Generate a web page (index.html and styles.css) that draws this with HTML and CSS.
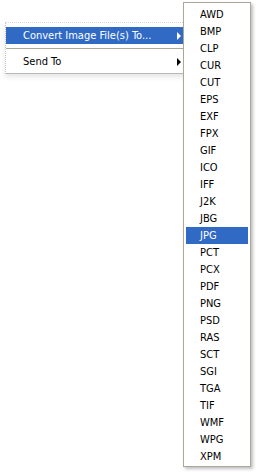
FILE: index.html
```html
<!DOCTYPE html>
<html>
<head>
<meta charset="utf-8">
<link rel="stylesheet" href="styles.css">
</head>
<body>
<div class="canvas">
  <div class="menu main">
    <div class="item active"><span class="label">Convert Image File(s) To...</span><span class="arrow white"></span></div>
    <div class="sep"></div>
    <div class="item"><span class="label">Send To</span><span class="arrow"></span></div>
  </div>
  <div class="menu sub">
    <div class="sitem">AWD</div>
    <div class="sitem">BMP</div>
    <div class="sitem">CLP</div>
    <div class="sitem">CUR</div>
    <div class="sitem">CUT</div>
    <div class="sitem">EPS</div>
    <div class="sitem">EXF</div>
    <div class="sitem">FPX</div>
    <div class="sitem">GIF</div>
    <div class="sitem">ICO</div>
    <div class="sitem">IFF</div>
    <div class="sitem">J2K</div>
    <div class="sitem">JBG</div>
    <div class="sitem active">JPG</div>
    <div class="sitem">PCT</div>
    <div class="sitem">PCX</div>
    <div class="sitem">PDF</div>
    <div class="sitem">PNG</div>
    <div class="sitem">PSD</div>
    <div class="sitem">RAS</div>
    <div class="sitem">SCT</div>
    <div class="sitem">SGI</div>
    <div class="sitem">TGA</div>
    <div class="sitem">TIF</div>
    <div class="sitem">WMF</div>
    <div class="sitem">WPG</div>
    <div class="sitem">XPM</div>
  </div>
</div>
</body>
</html>
```
FILE: styles.css
```css
html, body {
  margin: 0;
  padding: 0;
  background: #fff;
}
body {
  font-family: Tahoma, "DejaVu Sans Condensed", "Liberation Sans", sans-serif;
  font-size: 11px;
  color: #000;
}
.canvas {
  position: relative;
  width: 256px;
  height: 473px;
  overflow: hidden;
}
.main {
  margin-left: 5px;
  margin-top: 22px;
  width: 182px;
  padding: 4px 0 3px 0;
  border-left: 1px dotted #c8c8c8;
  border-top: 1px dotted #d8d8d8;
  border-bottom: 1px solid #b8b8b8;
  box-shadow: 0 3px 5px rgba(0,0,0,0.10);
  background: #fff;
  box-sizing: border-box;
  height: 52px;
}
.item {
  height: 17px;
  display: flex;
  align-items: center;
  padding-left: 17px;
  padding-right: 6px;
  justify-content: space-between;
}
.item.active {
  background: #316ac5;
  color: #fff;
}
.label {
  line-height: 17px;
}
.arrow {
  width: 0;
  height: 0;
  border-top: 4px solid transparent;
  border-bottom: 4px solid transparent;
  border-left: 4px solid #000;
  margin-right: 0;
}
.arrow.white {
  border-left-color: #fff;
}
.sep {
  height: 9px;
  display: flex;
  align-items: center;
}
.sep::before {
  content: "";
  display: block;
  width: 100%;
  height: 1px;
  background: #aca899;
  margin-top: -1px;
}
.sub {
  position: absolute;
  left: 183px;
  top: 2px;
  width: 68px;
  height: 465px;
  box-sizing: border-box;
  border: 1px solid #aca899;
  background: #fff;
  padding: 3px 2px;
  box-shadow: 2px 2px 3px rgba(0,0,0,0.25);
}
.sitem {
  height: 17px;
  line-height: 17px;
  padding-left: 14px;
}
.sitem.active {
  background: #316ac5;
  color: #fff;
}
```
